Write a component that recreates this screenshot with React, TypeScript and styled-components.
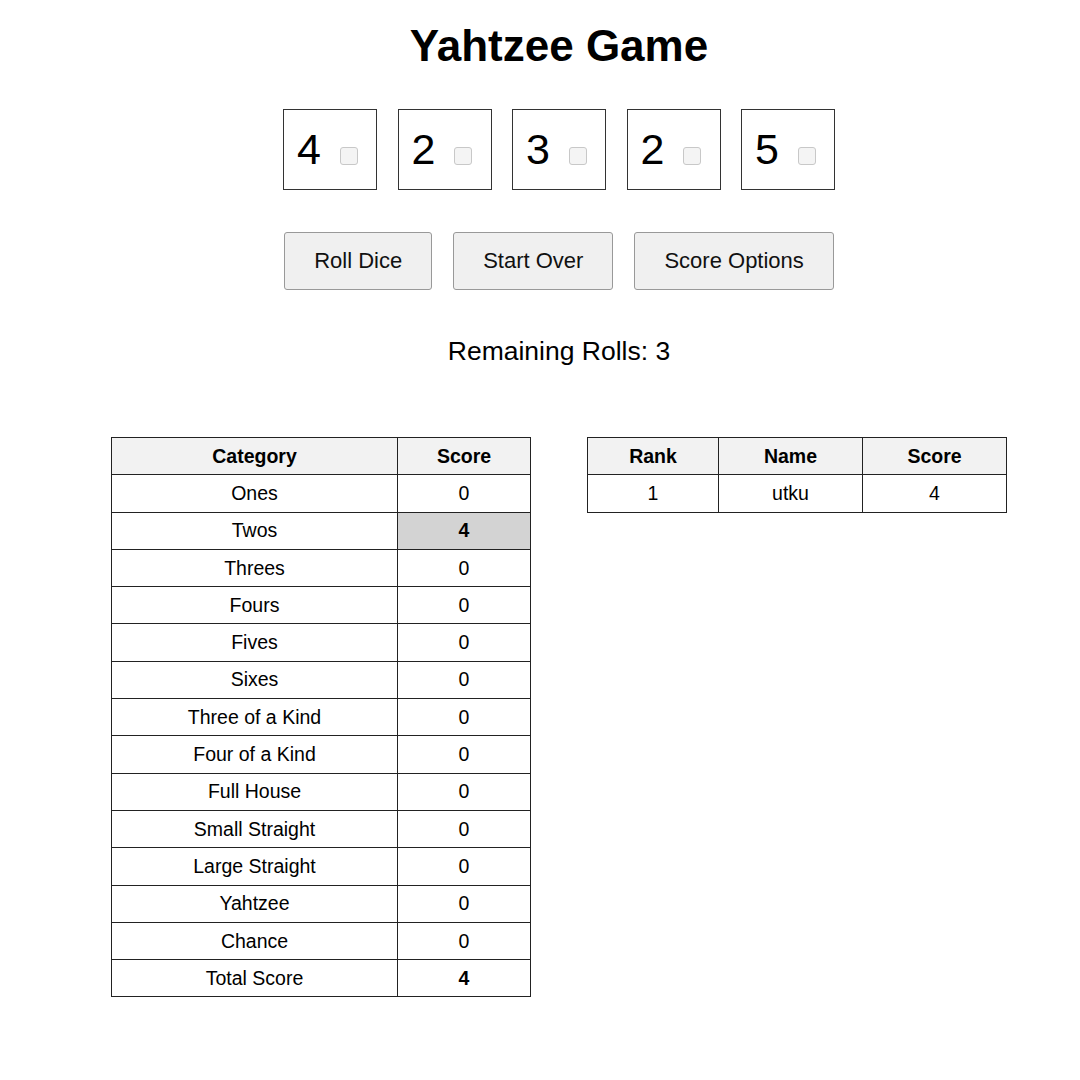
import React from 'react';
import styled, { createGlobalStyle } from 'styled-components';

const GlobalStyle = createGlobalStyle`
  html, body {
    margin: 0;
    padding: 0;
    background: #ffffff;
  }
  body {
    font-family: "Liberation Sans", Arial, sans-serif;
    color: #000;
  }
`;

const Page = styled.div`
  width: 1080px;
  box-sizing: border-box;
  padding-left: 38px;
  padding-top: 19px;
  display: flex;
  flex-direction: column;
  align-items: center;
`;

const Title = styled.h1`
  margin: 0;
  font-size: 44px;
  font-weight: 700;
  line-height: 54px;
`;

const DiceRow = styled.div`
  display: flex;
  gap: 20.5px;
  margin-top: 36px;
`;

const Die = styled.div`
  width: 94px;
  height: 81px;
  box-sizing: border-box;
  border: 1px solid #333;
  display: flex;
  align-items: center;
  padding-left: 13px;
`;

const DieValue = styled.span`
  font-size: 43px;
  line-height: 1;
`;

const HoldBox = styled.input`
  appearance: none;
  width: 18px;
  height: 18px;
  margin: 12px 0 0 19px;
  border: 1px solid #c8c8c8;
  border-radius: 3px;
  background: #f4f4f4;
`;

const ButtonRow = styled.div`
  display: flex;
  gap: 21px;
  margin-top: 42px;
`;

const Button = styled.button`
  height: 58px;
  padding: 0 29px;
  font-family: "Liberation Sans", Arial, sans-serif;
  font-size: 22px;
  color: #111;
  background: #f0f0f0;
  border: 1px solid #999;
  border-radius: 3px;
`;

const Rolls = styled.div`
  margin-top: 46px;
  font-size: 26.5px;
`;

const Tables = styled.div`
  display: flex;
  align-items: flex-start;
  gap: 56px;
  margin-top: 70px;
`;

const Table = styled.table<{ $width: number }>`
  width: ${p => p.$width}px;
  border-collapse: collapse;
  font-size: 19.5px;
`;

const Th = styled.th<{ $width?: number }>`
  width: ${p => (p.$width ? `${p.$width}px` : 'auto')};
  height: 36.3px;
  padding: 0;
  border: 1.4px solid #222;
  background: #f2f2f2;
  font-weight: 700;
  text-align: center;
`;

const Td = styled.td<{ $bold?: boolean; $highlight?: boolean }>`
  height: 36.3px;
  padding: 0;
  border: 1.4px solid #222;
  text-align: center;
  font-weight: ${p => (p.$bold ? 700 : 400)};
  background: ${p => (p.$highlight ? '#d3d3d3' : 'transparent')};
`;

const dice = [4, 2, 3, 2, 5];

const categories: { name: string; score: number; chosen?: boolean }[] = [
  { name: 'Ones', score: 0 },
  { name: 'Twos', score: 4, chosen: true },
  { name: 'Threes', score: 0 },
  { name: 'Fours', score: 0 },
  { name: 'Fives', score: 0 },
  { name: 'Sixes', score: 0 },
  { name: 'Three of a Kind', score: 0 },
  { name: 'Four of a Kind', score: 0 },
  { name: 'Full House', score: 0 },
  { name: 'Small Straight', score: 0 },
  { name: 'Large Straight', score: 0 },
  { name: 'Yahtzee', score: 0 },
  { name: 'Chance', score: 0 },
];

const leaderboard = [{ rank: 1, name: 'utku', score: 4 }];

export default function App() {
  const total = categories.reduce((sum, c) => sum + c.score, 0);

  return (
    <>
      <GlobalStyle />
      <Page>
        <Title>Yahtzee Game</Title>

        <DiceRow>
          {dice.map((v, i) => (
            <Die key={i}>
              <DieValue>{v}</DieValue>
              <HoldBox type="checkbox" />
            </Die>
          ))}
        </DiceRow>

        <ButtonRow>
          <Button>Roll Dice</Button>
          <Button>Start Over</Button>
          <Button>Score Options</Button>
        </ButtonRow>

        <Rolls>Remaining Rolls: 3</Rolls>

        <Tables>
          <Table $width={420}>
            <thead>
              <tr>
                <Th $width={285}>Category</Th>
                <Th>Score</Th>
              </tr>
            </thead>
            <tbody>
              {categories.map(c => (
                <tr key={c.name}>
                  <Td>{c.name}</Td>
                  <Td $bold={c.chosen} $highlight={c.chosen}>{c.score}</Td>
                </tr>
              ))}
              <tr>
                <Td>Total Score</Td>
                <Td $bold>{total}</Td>
              </tr>
            </tbody>
          </Table>

          <Table $width={420}>
            <thead>
              <tr>
                <Th $width={130}>Rank</Th>
                <Th $width={143}>Name</Th>
                <Th>Score</Th>
              </tr>
            </thead>
            <tbody>
              {leaderboard.map(r => (
                <tr key={r.rank}>
                  <Td>{r.rank}</Td>
                  <Td>{r.name}</Td>
                  <Td>{r.score}</Td>
                </tr>
              ))}
            </tbody>
          </Table>
        </Tables>
      </Page>
    </>
  );
}
